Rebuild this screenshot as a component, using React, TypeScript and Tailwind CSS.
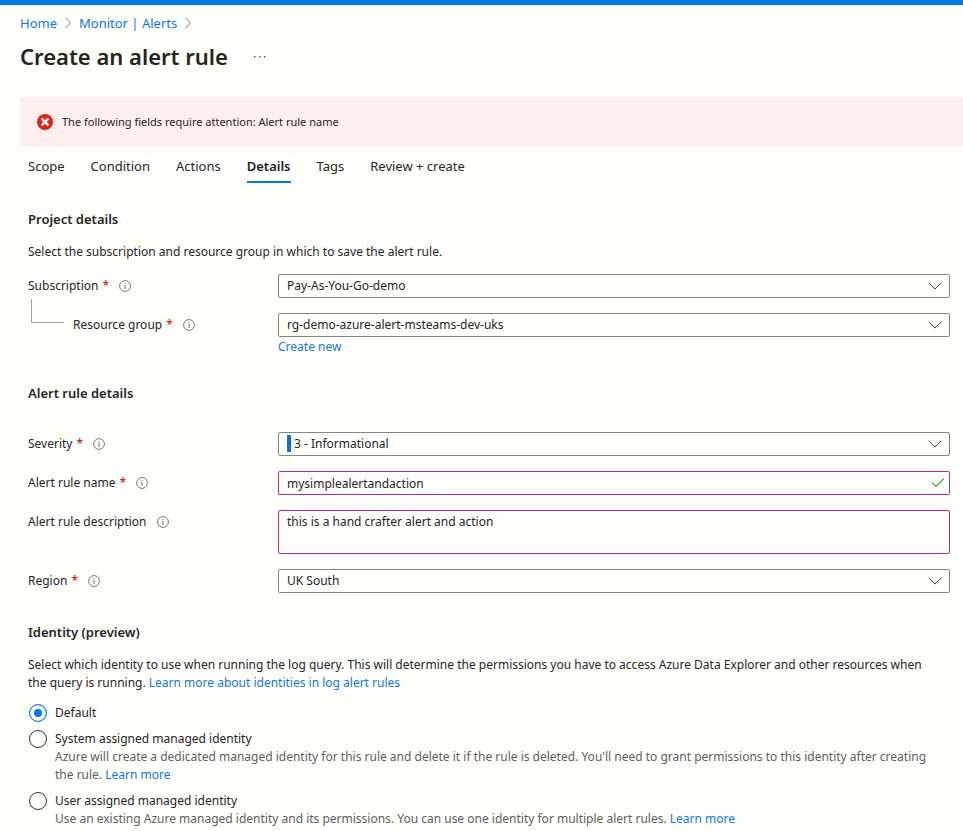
import React from "react";

const font = "font-['Noto_Sans','Open_Sans',sans-serif]";

function Crumb() {
  return (
    <svg viewBox="0 0 8 12" className="h-3 w-2 shrink-0" fill="none" stroke="#7d7d7a" aria-hidden="true">
      <path d="M1.5 1 L6.5 6 L1.5 11" />
    </svg>
  );
}

function Info() {
  return (
    <svg viewBox="0 0 12 12" className="h-3 w-3 shrink-0" fill="none" stroke="#6b6a68" aria-hidden="true">
      <circle cx="6" cy="6" r="5.4" strokeWidth="0.9" />
      <path d="M6 5 V9" strokeWidth="1" />
      <path d="M6 3 V4.1" strokeWidth="1" />
    </svg>
  );
}

function Link({ children }: { children: React.ReactNode }) {
  return (
    <a href="#" className="text-[#0f76e8] hover:underline">
      {children}
    </a>
  );
}

type LabelProps = { htmlFor: string; text: string; required?: boolean };

function FieldLabel({ htmlFor, text, required }: LabelProps) {
  return (
    <div className="flex h-6 items-center gap-2.5">
      <label htmlFor={htmlFor}>
        {text}
        {required && <span className="ml-1 font-semibold text-[#d92c20]">*</span>}
      </label>
      <Info />
    </div>
  );
}

function Dropdown({ id, value, bar }: { id: string; value: string; bar?: boolean }) {
  return (
    <div className="relative h-6">
      <select
        id={id}
        className={`block h-6 w-full appearance-none rounded-xs border border-[#868681] bg-transparent pr-8 ${bar ? "pl-[15px]" : "pl-2"}`}
      >
        <option>{value}</option>
      </select>
      {bar && <span className="pointer-events-none absolute left-[9px] top-[3px] h-[17px] w-1 bg-[#0a70da]" />}
      <svg
        viewBox="0 0 14 8"
        className="pointer-events-none absolute right-2 top-2 h-2 w-3.5"
        fill="none"
        stroke="#3b3a39"
        aria-hidden="true"
      >
        <path d="M0.7 0.8 L7 7.1 L13.3 0.8" />
      </svg>
    </div>
  );
}

const row = "grid grid-cols-[250px_minmax(0,1fr)]";
const tabs = ["Scope", "Condition", "Actions", "Details", "Tags", "Review + create"];

const identities = [
  { id: "default", label: "Default", text: "" },
  {
    id: "system",
    label: "System assigned managed identity",
    text: "Azure will create a dedicated managed identity for this rule and delete it if the rule is deleted. You'll need to grant permissions to this identity after creating the rule. ",
  },
  {
    id: "user",
    label: "User assigned managed identity",
    text: "Use an existing Azure managed identity and its permissions. You can use one identity for multiple alert rules. ",
  },
];

export default function App() {
  return (
    <div className={`min-h-screen border-t-[5px] border-[#0078e8] bg-[#fffffb] text-[12px] leading-[18px] text-[#262524] ${font}`}>
      <header className="pl-5">
        <nav className="flex items-center gap-[7px] pt-[9px] text-[13px]" aria-label="Breadcrumb">
          <Link>Home</Link>
          <Crumb />
          <Link>Monitor | Alerts</Link>
          <Crumb />
        </nav>
        <div className="mt-2 flex items-center gap-[25px]">
          <h1 className="text-[22px] font-semibold leading-8">Create an alert rule</h1>
          <button type="button" aria-label="More actions" className="p-0">
            <svg viewBox="0 0 14 4" className="h-1 w-3.5" fill="#6b6a68" aria-hidden="true">
              <rect x="1" y="2" width="1.5" height="1.5" />
              <rect x="6" y="2" width="1.5" height="1.5" />
              <rect x="11" y="2" width="1.5" height="1.5" />
            </svg>
          </button>
        </div>
        <div role="alert" className="mt-[25px] flex h-[50px] items-center gap-2 rounded-l-xs bg-[#ffefed] pl-4 text-[11px]">
          <svg viewBox="0 0 18 18" className="h-[18px] w-[18px]" aria-hidden="true">
            <circle cx="9" cy="9" r="8" fill="#df2318" />
            <path d="M5.6 5.6 L12.4 12.4 M12.4 5.6 L5.6 12.4" stroke="#fff" strokeWidth="2.4" />
          </svg>
          <span>The following fields require attention: Alert rule name</span>
        </div>
      </header>

      <main className="pl-7 pr-[13px]">
        <div role="tablist" className="flex h-9 gap-[26px] text-[13px]">
          {tabs.map((t) => (
            <button
              key={t}
              type="button"
              role="tab"
              aria-selected={t === "Details"}
              className={`border-b-2 pt-1 ${t === "Details" ? "border-[#0078ee] font-semibold" : "border-transparent"}`}
            >
              {t}
            </button>
          ))}
        </div>

        <section>
          <h2 className="mt-[27px] text-[13px] font-semibold">Project details</h2>
          <p className="mt-[15px]">Select the subscription and resource group in which to save the alert rule.</p>
          <div className={`mt-[13px] ${row}`}>
            <FieldLabel htmlFor="subscription" text="Subscription" required />
            <Dropdown id="subscription" value="Pay-As-You-Go-demo" />
          </div>
          <div className={`mt-[15px] ${row}`}>
            <div className="flex h-6 gap-[9px] pl-[3px]">
              <span className="-mt-3.5 h-6 w-[33px] border-b border-l border-[#a3a29f]" />
              <FieldLabel htmlFor="group" text="Resource group" required />
            </div>
            <div>
              <Dropdown id="group" value="rg-demo-azure-alert-msteams-dev-uks" />
              <div className="pt-px">
                <Link>Create new</Link>
              </div>
            </div>
          </div>
        </section>

        <section>
          <h2 className="mt-7 text-[13px] font-semibold">Alert rule details</h2>
          <div className="mt-[30px] grid gap-[15px]">
            <div className={row}>
              <FieldLabel htmlFor="severity" text="Severity" required />
              <Dropdown id="severity" value="3 - Informational" bar />
            </div>
            <div className={row}>
              <FieldLabel htmlFor="name" text="Alert rule name" required />
              <div className="relative h-6">
                <input
                  id="name"
                  type="text"
                  defaultValue="mysimplealertandaction"
                  className="block h-6 w-full rounded-xs border border-[#c3278f] bg-transparent pl-2 pr-8"
                />
                <svg
                  viewBox="0 0 14 10"
                  className="pointer-events-none absolute right-[5px] top-[7px] h-2.5 w-3.5"
                  fill="none"
                  stroke="#4cb648"
                  strokeWidth="1.3"
                  aria-hidden="true"
                >
                  <path d="M1 4.5 L5 8.5 L12.8 0.8" />
                </svg>
              </div>
            </div>
            <div className={row}>
              <FieldLabel htmlFor="description" text="Alert rule description" />
              <textarea
                id="description"
                defaultValue="this is a hand crafter alert and action"
                className="block h-11 w-full resize-none rounded-xs border border-[#c3278f] bg-transparent px-2 py-0.5"
              />
            </div>
            <div className={row}>
              <FieldLabel htmlFor="region" text="Region" required />
              <Dropdown id="region" value="UK South" />
            </div>
          </div>
        </section>

        <section>
          <h2 className="mt-[30px] text-[13px] font-semibold">Identity (preview)</h2>
          <p className="mt-[15px] pr-2.5">
            Select which identity to use when running the log query. This will determine the permissions you have to
            access Azure Data Explorer and other resources when the query is running.{" "}
            <Link>Learn more about identities in log alert rules</Link>
          </p>
          <div role="radiogroup" aria-label="Identity (preview)" className="mt-3 grid gap-2">
            {identities.map((o) => (
              <div key={o.id} className="flex gap-2 pl-px">
                <input
                  type="radio"
                  name="identity"
                  id={o.id}
                  defaultChecked={o.id === "default"}
                  className="h-[18px] w-[18px] shrink-0 appearance-none rounded-full border border-[#323130] checked:border-[#0f7cf0] checked:bg-[#0078ee] checked:shadow-[inset_0_0_0_4px_#fffffb]"
                />
                <div className="pr-2.5">
                  <label htmlFor={o.id} className="block">
                    {o.label}
                  </label>
                  {o.text && (
                    <p className="text-[#605e5c]">
                      {o.text}
                      <Link>Learn more</Link>
                    </p>
                  )}
                </div>
              </div>
            ))}
          </div>
        </section>
      </main>
    </div>
  );
}
